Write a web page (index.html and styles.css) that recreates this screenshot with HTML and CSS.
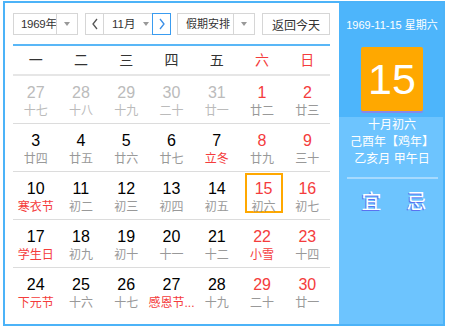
FILE: index.html
```html
<!DOCTYPE html>
<html lang="zh">
<head>
<meta charset="utf-8">
<link rel="stylesheet" href="styles.css">
</head>
<body>
<div class="cal">
  <div class="main">
    <div class="controls">
      <div class="sel year"><span class="sel-text">1969年</span><span class="sel-arrow"><i class="tri"></i></span></div>
      <div class="sel month">
        <span class="nav prev"><svg width="8" height="12" viewBox="0 0 8 12"><polyline points="6,1 2,6 6,11" fill="none" stroke="#555" stroke-width="1.3"/></svg></span>
        <span class="month-text">11月<i class="tri"></i></span>
        <span class="nav next"><svg width="8" height="12" viewBox="0 0 8 12"><polyline points="2,1 6,6 2,11" fill="none" stroke="#3a8ee6" stroke-width="1.3"/></svg></span>
      </div>
      <div class="sel holiday"><span class="sel-text">假期安排</span><span class="sel-arrow"><i class="tri"></i></span></div>
      <div class="btn">返回今天</div>
    </div>
    <div class="weekhead">
      <span>一</span><span>二</span><span>三</span><span>四</span><span>五</span><span class="red">六</span><span class="red">日</span>
    </div>
    <div class="grid">
      <div class="row">
        <div class="cell other"><div class="day"><b>27</b><em>十七</em></div></div>
        <div class="cell other"><div class="day"><b>28</b><em>十八</em></div></div>
        <div class="cell other"><div class="day"><b>29</b><em>十九</em></div></div>
        <div class="cell other"><div class="day"><b>30</b><em>二十</em></div></div>
        <div class="cell other"><div class="day"><b>31</b><em>廿一</em></div></div>
        <div class="cell wk"><div class="day"><b>1</b><em>廿二</em></div></div>
        <div class="cell wk"><div class="day"><b>2</b><em>廿三</em></div></div>
      </div>
      <div class="row">
        <div class="cell"><div class="day"><b>3</b><em>廿四</em></div></div>
        <div class="cell"><div class="day"><b>4</b><em>廿五</em></div></div>
        <div class="cell"><div class="day"><b>5</b><em>廿六</em></div></div>
        <div class="cell"><div class="day"><b>6</b><em>廿七</em></div></div>
        <div class="cell"><div class="day"><b>7</b><em class="fest">立冬</em></div></div>
        <div class="cell wk"><div class="day"><b>8</b><em>廿九</em></div></div>
        <div class="cell wk"><div class="day"><b>9</b><em>三十</em></div></div>
      </div>
      <div class="row">
        <div class="cell"><div class="day"><b>10</b><em class="fest">寒衣节</em></div></div>
        <div class="cell"><div class="day"><b>11</b><em>初二</em></div></div>
        <div class="cell"><div class="day"><b>12</b><em>初三</em></div></div>
        <div class="cell"><div class="day"><b>13</b><em>初四</em></div></div>
        <div class="cell"><div class="day"><b>14</b><em>初五</em></div></div>
        <div class="cell wk"><div class="day selected"><b>15</b><em>初六</em></div></div>
        <div class="cell wk"><div class="day"><b>16</b><em>初七</em></div></div>
      </div>
      <div class="row">
        <div class="cell"><div class="day"><b>17</b><em class="fest">学生日</em></div></div>
        <div class="cell"><div class="day"><b>18</b><em>初九</em></div></div>
        <div class="cell"><div class="day"><b>19</b><em>初十</em></div></div>
        <div class="cell"><div class="day"><b>20</b><em>十一</em></div></div>
        <div class="cell"><div class="day"><b>21</b><em>十二</em></div></div>
        <div class="cell wk"><div class="day"><b>22</b><em class="fest">小雪</em></div></div>
        <div class="cell wk"><div class="day"><b>23</b><em>十四</em></div></div>
      </div>
      <div class="row last">
        <div class="cell"><div class="day"><b>24</b><em class="fest">下元节</em></div></div>
        <div class="cell"><div class="day"><b>25</b><em>十六</em></div></div>
        <div class="cell"><div class="day"><b>26</b><em>十七</em></div></div>
        <div class="cell"><div class="day"><b>27</b><em class="fest">感恩节...</em></div></div>
        <div class="cell"><div class="day"><b>28</b><em>十九</em></div></div>
        <div class="cell wk"><div class="day"><b>29</b><em>二十</em></div></div>
        <div class="cell wk"><div class="day"><b>30</b><em>廿一</em></div></div>
      </div>
    </div>
  </div>
  <div class="side">
    <div class="side-top">
      <div class="date">1969-11-15 星期六</div>
      <div class="bigday">15</div>
    </div>
    <div class="side-bottom">
      <div class="lunar">十月初六</div>
      <div class="lunar">己酉年【鸡年】</div>
      <div class="lunar">乙亥月 甲午日</div>
      <div class="sep"></div>
      <div class="yiji"><span>宜</span><span>忌</span></div>
    </div>
  </div>
</div>
</body>
</html>
```

FILE: styles.css
```css
html, body {
  margin: 0;
  padding: 0;
  background: #fff;
}
body {
  font-family: "Liberation Sans", "Noto Sans CJK SC", sans-serif;
}
.cal {
  margin: 1px 0 0 3px;
  width: 442px;
  height: 325px;
  box-sizing: border-box;
  border: 2px solid #4cb3f8;
  display: flex;
}
.main {
  width: 334px;
  box-sizing: border-box;
  padding: 10px 9px 0 8px;
  background: #fff;
}
.controls {
  display: flex;
  height: 22px;
  font-size: 12px;
  color: #333;
  white-space: nowrap;
}
.sel, .btn {
  box-sizing: border-box;
  height: 22px;
  border: 1px solid #d6d6d6;
  display: flex;
  align-items: center;
  background: #fff;
}
.year { width: 65px; }
.month { width: 86px; margin-left: 7px; }
.holiday { width: 78px; margin-left: 6px; }
.btn { width: 68px; margin-left: 7px; justify-content: center; }
.sel-text {
  flex: 1;
  min-width: 0;
  padding-left: 8px;
  line-height: 20px;
}
.year .sel-text {
  font-size: 11.5px;
  padding-left: 7px;
  letter-spacing: -0.3px;
}
.holiday .sel-text {
  padding-left: 8px;
  font-size: 11px;
}
.sel-arrow {
  flex: none;
  width: 20px;
  height: 20px;
  border-left: 1px solid #d6d6d6;
  display: flex;
  align-items: center;
  justify-content: center;
}
.tri {
  display: inline-block;
  width: 0;
  height: 0;
  border-left: 3.5px solid transparent;
  border-right: 3.5px solid transparent;
  border-top: 4px solid #999;
}
.nav {
  flex: none;
  width: 18px;
  height: 20px;
  display: flex;
  align-items: center;
  justify-content: center;
  box-sizing: border-box;
}
.prev { border-right: 1px solid #d6d6d6; }
.next {
  width: 19px;
  height: 22px;
  margin: -1px -1px -1px 0;
  border: 1px solid #3a9cf0;
}
.month-text {
  flex: 1;
  display: flex;
  align-items: center;
  padding-left: 8px;
  gap: 8px;
  line-height: 20px;
  font-size: 11.5px;
}
.weekhead {
  margin-top: 9px;
  border-top: 2px solid #59b7f7;
  border-bottom: 2px solid #e6e6e6;
  display: grid;
  grid-template-columns: repeat(7, 1fr);
  height: 28px;
  line-height: 28px;
  font-size: 14px;
  color: #333;
  text-align: center;
}
.red { color: #f43c3c; }
.row {
  display: grid;
  grid-template-columns: repeat(7, 1fr);
  height: 47px;
  border-bottom: 1px solid #dcdcdc;
}
.row.last { border-bottom: none; }
.cell {
  display: flex;
  justify-content: center;
}
.day {
  width: 38px;
  height: 40px;
  margin-top: 1px;
  box-sizing: border-box;
  border: 2px solid transparent;
  padding-top: 5px;
  display: flex;
  flex-direction: column;
  align-items: center;
}
.wk .day.selected { border-color: #ffa800; margin-left: 3px; }
.day b {
  font-weight: normal;
  font-size: 16px;
  line-height: 18px;
  color: #000;
}
.day em {
  font-style: normal;
  font-size: 12px;
  line-height: 18px;
  color: #999;
  white-space: nowrap;
}
.day em.fest { color: #f43c3c; }
.wk .day b { color: #f43c3c; }
.other .day b { color: #bbb; }
.other .day em { color: #bbb; }
.side {
  flex: 1;
  display: flex;
  flex-direction: column;
  color: #fff;
}
.side-top {
  height: 114px;
  background: #4db5fb;
  display: flex;
  flex-direction: column;
  align-items: center;
}
.date {
  margin-top: 14px;
  font-size: 11px;
  line-height: 16px;
  white-space: nowrap;
  padding-left: 2px;
}
.bigday {
  margin-top: 14px;
  margin-left: 2px;
  width: 62px;
  height: 64px;
  background: #ffa800;
  box-shadow: 0 2px 0 #8a88e8;
  border-radius: 2px;
  font-size: 43px;
  line-height: 64px;
  text-align: center;
  color: #fff;
}
.side-bottom {
  flex: 1;
  background: #6dc4fe;
  display: flex;
  flex-direction: column;
  align-items: center;
}
.lunar {
  font-size: 12px;
  line-height: 17px;
  white-space: nowrap;
  padding-left: 2px;
}
.sep {
  align-self: stretch;
  margin: 9px 5px 0 8px;
  height: 2px;
  background: #a6dafe;
}
.yiji {
  margin-top: 13px;
  display: flex;
  gap: 25px;
  padding-left: 6px;
  font-size: 20px;
  line-height: 20px;
}
.yiji span {
  text-shadow: -1px 1px 0 #5a72f0;
}
```
